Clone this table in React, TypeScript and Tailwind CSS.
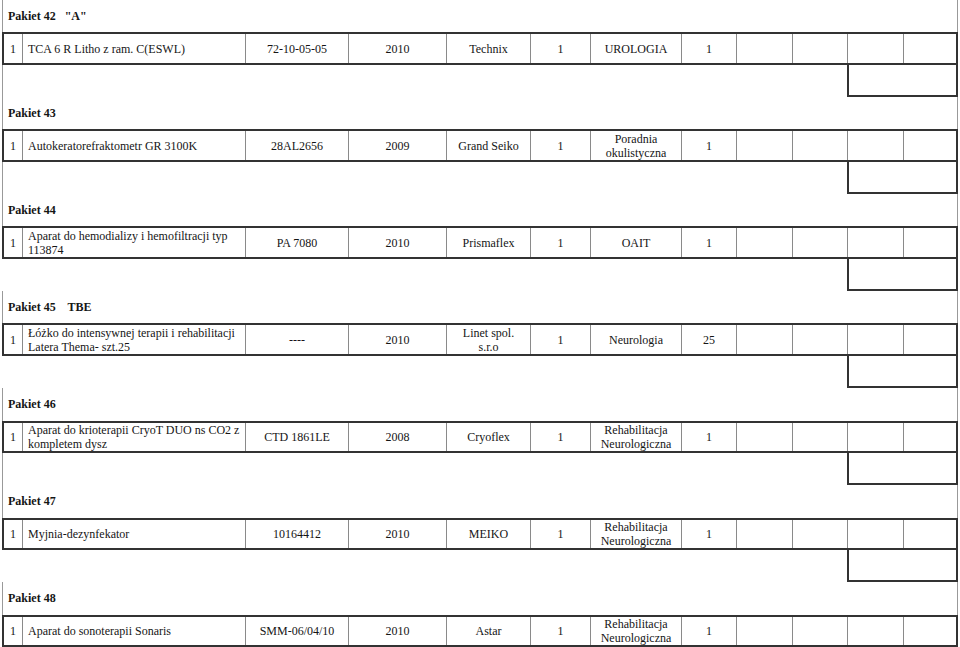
import React from "react";

type Block = {
  header: string;
  cells: string[];
  boxLeftLine: boolean;
  box: boolean;
};

const blocks: Block[] = [
  {
    header: 'Pakiet 42   "A"',
    cells: ["1", "TCA 6 R Litho z ram. C(ESWL)", "72-10-05-05", "2010", "Technix", "1", "UROLOGIA", "1"],
    boxLeftLine: true,
    box: true,
  },
  {
    header: "Pakiet 43",
    cells: ["1", "Autokeratorefraktometr GR 3100K", "28AL2656", "2009", "Grand Seiko", "1", "Poradnia\nokulistyczna", "1"],
    boxLeftLine: true,
    box: true,
  },
  {
    header: "Pakiet 44",
    cells: ["1", "Aparat do hemodializy i hemofiltracji typ\n113874", "PA 7080", "2010", "Prismaflex", "1", "OAIT", "1"],
    boxLeftLine: false,
    box: true,
  },
  {
    header: "Pakiet 45    TBE",
    cells: ["1", "Łóżko do intensywnej terapii i rehabilitacji\nLatera Thema- szt.25", "----", "2010", "Linet spol.\ns.r.o", "1", "Neurologia", "25"],
    boxLeftLine: false,
    box: true,
  },
  {
    header: "Pakiet 46",
    cells: ["1", "Aparat do krioterapii CryoT DUO ns CO2 z\nkompletem dysz", "CTD 1861LE", "2008", "Cryoflex", "1", "Rehabilitacja\nNeurologiczna", "1"],
    boxLeftLine: true,
    box: true,
  },
  {
    header: "Pakiet 47",
    cells: ["1", "Myjnia-dezynfekator", "10164412", "2010", "MEIKO", "1", "Rehabilitacja\nNeurologiczna", "1"],
    boxLeftLine: false,
    box: true,
  },
  {
    header: "Pakiet 48",
    cells: ["1", "Aparat do sonoterapii Sonaris", "SMM-06/04/10", "2010", "Astar", "1", "Rehabilitacja\nNeurologiczna", "1"],
    boxLeftLine: false,
    box: false,
  },
];

const colClasses = [
  "w-[19px] justify-center border-r border-[#8a8a8a]",
  "w-[223px] justify-start pl-[5px] border-r border-[#8a8a8a]",
  "w-[103px] justify-center text-center border-r border-[#8a8a8a]",
  "w-[98px] justify-center text-center border-r border-[#8a8a8a]",
  "w-[84px] justify-center text-center border-r border-[#8a8a8a]",
  "w-[60px] justify-center text-center border-r border-[#8a8a8a]",
  "w-[91px] justify-center text-center border-r border-[#8a8a8a]",
  "w-[55px] justify-center text-center border-r border-[#8a8a8a]",
  "w-[56px] justify-center border-r border-[#8a8a8a]",
  "w-[55px] justify-center border-r border-[#8a8a8a]",
  "w-[56px] justify-center border-r border-[#8a8a8a]",
  "flex-1 justify-center",
];

function DataRow({ cells }: { cells: string[] }) {
  return (
    <div className="ml-[2px] w-[956px] flex border-2 border-[#333]">
      {colClasses.map((cls, i) => (
        <div
          key={i}
          className={`flex items-center h-full whitespace-pre leading-[14px] ${cls}`}
        >
          {cells[i] ?? ""}
        </div>
      ))}
    </div>
  );
}

export default function App() {
  return (
    <div
      className="w-[960px] h-[647px] bg-white text-[#151515] text-[12px] grid grid-rows-[repeat(20,minmax(0,1fr))] overflow-hidden"
      style={{ fontFamily: '"Liberation Serif", "Times New Roman", serif' }}
    >
      {blocks.map((b, bi) => (
        <React.Fragment key={bi}>
          <div className="ml-[2px] w-[956px] flex items-center border-l border-r border-[#999] pl-[5px] font-bold whitespace-pre">
            {b.header}
          </div>
          <DataRow cells={b.cells} />
          {b.box && (
            <div
              className={`ml-[2px] w-[956px] flex justify-end ${
                b.boxLeftLine ? "border-l border-[#999]" : ""
              }`}
            >
              <div className="w-[111px] h-full border-l-2 border-r-2 border-b-2 border-[#333]" />
            </div>
          )}
        </React.Fragment>
      ))}
    </div>
  );
}
